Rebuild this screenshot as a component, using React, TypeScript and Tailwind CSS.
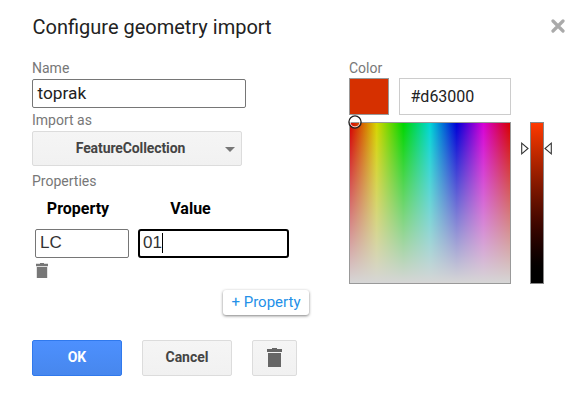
function Trash({ className }: { className: string }) {
  return (
    <svg className={className} viewBox="0 0 15 19" preserveAspectRatio="none" fill="currentColor" aria-hidden="true">
      <path d="M5 0h5v1h5v3H0V1h5zM1 5h13v14H1z" />
    </svg>
  );
}

function Label({ children, className }: { children: string; className: string }) {
  return <div className={`text-[14px] leading-4 text-[#777] ${className}`}>{children}</div>;
}

function ColorPicker() {
  return (
    <div className="w-[205px]">
      <Label className="mt-[60px]">Color</Label>
      <div className="mt-[2px] flex gap-[10px]">
        <div className="h-[37px] w-10 border border-[#999] bg-[#d63000]" />
        <div className="flex h-[37px] w-28 items-center border border-[#ccc] pl-[10.500px] text-[16px] text-[#222]">#d63000</div>
      </div>
      <div className="mt-[7px] flex">
        <div className="relative h-[162px] w-[162px] border border-[#999] bg-[linear-gradient(to_bottom,transparent,#d6d6d6),linear-gradient(to_right,#d60000,#d6d600_16.67%,#00d600_33.33%,#00d6d6_50%,#0000d6_66.67%,#d600d6_83.33%,#d60000)]">
          <svg className="absolute -left-[2px] -top-[8px] h-[14px] w-[14px]" viewBox="0 0 14 14" fill="none">
            <circle cx="7" cy="7" r="5" stroke="#fff" />
            <circle cx="7" cy="7" r="6.100" stroke="#222" strokeWidth="1.300" />
          </svg>
        </div>
        <svg className="ml-[10px] mt-5 h-[13px] w-[8px]" viewBox="0 0 8 13" fill="#fff">
          <path d="M.7 1.200v10.600L7 6.500z" stroke="#333" strokeWidth="1.100" />
        </svg>
        <div className="ml-px h-[162px] w-[14px] border border-[#888] bg-gradient-to-b from-[#ff3900] to-black" />
        <svg className="mt-5 h-[13px] w-[8px]" viewBox="0 0 8 13" fill="#fff">
          <path d="M7.300 1.200v10.600L1 6.500z" stroke="#333" strokeWidth="1.100" />
        </svg>
      </div>
    </div>
  );
}

export default function App() {
  return (
    <div className="relative flex h-[404px] w-[586px] overflow-hidden bg-white font-['Roboto',sans-serif]">
      <main className="ml-8 w-[317px]">
        <h1 className="mt-[15px] pl-[0.5px] text-[20px] leading-6 text-[#222]">Configure geometry import</h1>
        <Label className="mt-[21px]">Name</Label>
        <div className="mt-[3px] flex h-[29px] w-[214px] items-center rounded-[2px] border border-[#767676] pl-[4.500px] text-[17.300px] text-[#222]">toprak</div>
        <Label className="mt-1">Import as</Label>
        <div className="mt-[3px] flex h-[35px] w-[210px] items-center rounded-[2px] border border-[#dcdcdc] bg-gradient-to-b from-[#f5f5f5] to-[#f1f1f1] text-[14px] font-bold text-[#444]">
          <span className="w-[192px] pl-[3px] text-center tracking-[-0.1px]">FeatureCollection</span>
          <span className="mt-px border-x-[5px] border-t-[5px] border-x-transparent border-t-[#777]" />
        </div>
        <Label className="mt-[7px]">Properties</Label>
        <div className="mt-[10px] flex gap-[9px] pl-[3px] text-[16px] leading-5 text-black">
          <div className="w-[94px]">
            <div className="w-[86px] text-center font-bold">Property</div>
            <div className="mt-[10px] flex h-[29px] items-center rounded-[2px] border border-[#767676] pb-[2px] pl-[4px] font-['Liberation_Sans',sans-serif] text-[17px] text-[#333]">LC</div>
          </div>
          <div className="w-[151px]">
            <div className="w-[105px] text-center font-bold">Value</div>
            <div className="mt-[10px] flex h-[29px] items-center rounded-[3px] border-2 border-black pb-[2px] pl-[3px] font-['Liberation_Sans',sans-serif] text-[17px] text-[#333]">
              01<span className="h-5 w-px bg-black" />
            </div>
          </div>
        </div>
        <div className="ml-1 mt-[5px] text-[#777]"><Trash className="h-[15px] w-[12px]" /></div>
        <button className="ml-[191px] mt-[12px] block h-[25px] w-[86px] whitespace-nowrap rounded-[3px] bg-white text-[15px] leading-[25px] text-[#2490e8] shadow-[0_1px_3px_rgba(0,0,0,0.5)]">+ Property</button>
        <div className="mt-[25px] flex gap-5 text-[14px] font-bold">
          <button className="h-9 w-[90px] rounded-[2px] border border-[#3079ed] bg-gradient-to-b from-[#4d90fe] to-[#4787ed] pb-[2px] text-white">OK</button>
          <button className="h-9 w-[90px] rounded-[2px] border border-[#dcdcdc] bg-gradient-to-b from-[#f5f5f5] to-[#f1f1f1] pb-[2px] text-[#444]">Cancel</button>
          <button aria-label="Delete geometry" className="flex h-9 w-[45px] items-center justify-center rounded-[2px] border border-[#dcdcdc] bg-gradient-to-b from-[#f5f5f5] to-[#f1f1f1] pb-px text-[#666]">
            <Trash className="h-[19px] w-[15px]" />
          </button>
        </div>
      </main>
      <ColorPicker />
      <button aria-label="Close" className="absolute left-[551px] top-[19px]">
        <svg className="h-[14px] w-[14px]" viewBox="0 0 14 14">
          <path d="M2 2l10 10M12 2L2 12" stroke="#aaa" strokeWidth="3.200" strokeLinecap="round" />
        </svg>
      </button>
    </div>
  );
}
